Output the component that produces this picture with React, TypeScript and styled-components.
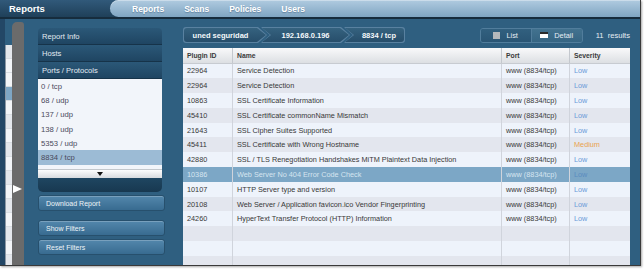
import React from "react";
import styled, { createGlobalStyle } from "styled-components";

const GlobalStyle = createGlobalStyle`
  *, *::before, *::after { box-sizing: border-box; }
  html, body { margin: 0; padding: 0; background: #fff; }
  body { font-family: "Liberation Sans", Arial, sans-serif; }
`;

type Severity = "Low" | "Medium";
type Finding = { id: string; name: string; port: string; severity: Severity };

const findings: Finding[] = [
  { id: "22964", name: "Service Detection", port: "www (8834/tcp)", severity: "Low" },
  { id: "22964", name: "Service Detection", port: "www (8834/tcp)", severity: "Low" },
  { id: "10863", name: "SSL Certificate Information", port: "www (8834/tcp)", severity: "Low" },
  { id: "45410", name: "SSL Certificate commonName Mismatch", port: "www (8834/tcp)", severity: "Low" },
  { id: "21643", name: "SSL Cipher Suites Supported", port: "www (8834/tcp)", severity: "Low" },
  { id: "45411", name: "SSL Certificate with Wrong Hostname", port: "www (8834/tcp)", severity: "Medium" },
  { id: "42880", name: "SSL / TLS Renegotiation Handshakes MiTM Plaintext Data Injection", port: "www (8834/tcp)", severity: "Low" },
  { id: "10386", name: "Web Server No 404 Error Code Check", port: "www (8834/tcp)", severity: "Low" },
  { id: "10107", name: "HTTP Server type and version", port: "www (8834/tcp)", severity: "Low" },
  { id: "20108", name: "Web Server / Application favicon.ico Vendor Fingerprinting", port: "www (8834/tcp)", severity: "Low" },
  { id: "24260", name: "HyperText Transfer Protocol (HTTP) Information", port: "www (8834/tcp)", severity: "Low" },
];

const selectedFinding = 7;
const ports = ["0 / tcp", "68 / udp", "137 / udp", "138 / udp", "5353 / udp", "8834 / tcp", "8835 / tcp"];
const selectedPort = "8834 / tcp";
const crumbs: { label: string; kind: CrumbKind; width: number }[] = [
  { label: "uned seguridad", kind: "first", width: 84 },
  { label: "192.168.0.196", kind: "middle", width: 89 },
  { label: "8834 / tcp", kind: "last", width: 61 },
];

type CrumbKind = "first" | "middle" | "last";
type Tone = "light" | "gray" | "active";

const crumbClip = {
  first: "polygon(0 0, calc(100% - 9px) 0, 100% 50%, calc(100% - 9px) 100%, 0 100%)",
  middle: "polygon(0 0, calc(100% - 9px) 0, 100% 50%, calc(100% - 9px) 100%, 0 100%, 9px 50%)",
  last: "polygon(0 0, 100% 0, 100% 100%, 0 100%, 9px 50%)",
};

const crumbRadius = {
  first: "3px 0 0 3px",
  middle: "0",
  last: "0 3px 3px 0",
};

const rowBg = {
  light: "#eef3fb",
  gray: "#e3e6ee",
  active: "#7ca7c6",
};

const Page = styled.div`
  width: 644px;
  height: 270px;
  background: #fff;
  overflow: hidden;
`;

const Window = styled.div`
  width: 641px;
  height: 266px;
  display: flex;
  flex-direction: column;
  background: #2f5f80;
  border-right: 1px solid #3a3a3a;
  border-bottom: 1px solid #3a3a3a;
  box-shadow: 1px 1px 2px rgba(0, 0, 0, 0.35);
  overflow: hidden;
`;

const TopBar = styled.div`
  height: 19px;
  flex-shrink: 0;
  display: flex;
  background: linear-gradient(#31597a, #1f4059);
  border-bottom: 2px solid #162c3d;
`;

const AppTitle = styled.div`
  width: 110px;
  padding-left: 9px;
  display: flex;
  align-items: center;
  color: #fff;
  font-size: 9.5px;
  font-weight: bold;
`;

const NavPill = styled.nav`
  flex: 1;
  display: flex;
  align-items: center;
  gap: 20px;
  padding-left: 22px;
  border-radius: 9px 0 0 9px;
  background: linear-gradient(#b0cbe0, #7fa5c2);
  box-shadow: inset 0 1px 0 rgba(255, 255, 255, 0.35);
`;

const NavLink = styled.span`
  color: #fff;
  font-size: 8.5px;
  font-weight: bold;
  text-shadow: 0 1px 1px rgba(20, 50, 80, 0.35);
`;

const Body = styled.div`
  flex: 1;
  min-height: 0;
  display: flex;
  align-items: flex-start;
`;

const BackWindow = styled.div`
  width: 12px;
  height: 100%;
  flex-shrink: 0;
  display: flex;
`;

const BackEdge = styled.div`
  width: 5px;
  height: 100%;
  background: #234766;
`;

const BackSheet = styled.div`
  width: 7px;
  height: 100%;
  margin-top: 26px;
  display: flex;
  flex-direction: column;
  background: #f1f3f6;
  border-left: 1px solid #8d99a6;
`;

const BackRow = styled.div<{ $tone: Tone }>`
  height: 14px;
  flex-shrink: 0;
  background: ${(p) => (p.$tone === "active" ? "#7ea6c4" : p.$tone === "gray" ? "#e4e7ec" : "#f3f5f8")};
  border-bottom: 1px solid #d9dde2;
`;

const Rail = styled.div`
  width: 12px;
  height: 100%;
  flex-shrink: 0;
  margin-top: 3px;
  padding-top: 163px;
  background: #6b6b6b;
  border-radius: 5px 3px 0 0;
`;

const RailArrow = styled.div`
  width: 0;
  height: 0;
  margin-left: 1px;
  border-left: 9px solid #fff;
  border-top: 4.5px solid transparent;
  border-bottom: 4.5px solid transparent;
`;

const Sidebar = styled.aside`
  width: 127px;
  flex-shrink: 0;
  margin-left: 14px;
  padding-top: 9px;
  display: flex;
  flex-direction: column;
`;

const SideNav = styled.div`
  width: 124px;
  display: flex;
  flex-direction: column;
`;

const SideItem = styled.div<{ $first?: boolean }>`
  height: 17px;
  padding-left: 4px;
  display: flex;
  align-items: center;
  color: #e2eaf1;
  font-size: 7.6px;
  background: linear-gradient(#2b5878, #1f4562);
  border-bottom: 1px solid #163349;
  border-radius: ${(p) => (p.$first ? "4px 4px 0 0" : "0")};
`;

const PortList = styled.div`
  height: 90px;
  overflow: hidden;
  background: #f2f5fa;
`;

const PortItem = styled.div<{ $active: boolean }>`
  height: 14.3px;
  padding-left: 3px;
  display: flex;
  align-items: center;
  font-size: 7.7px;
  color: #4a4a5c;
  background: ${(p) => (p.$active ? "#9cbbd5" : "transparent")};
`;

const ScrollStrip = styled.div`
  height: 9px;
  display: flex;
  align-items: center;
  justify-content: center;
  background: linear-gradient(#fdfdfd, #d8dbdf);
  border-top: 1px solid #c2c7cc;
`;

const ScrollArrow = styled.div`
  width: 0;
  height: 0;
  border-top: 4px solid #111;
  border-left: 3.5px solid transparent;
  border-right: 3.5px solid transparent;
`;

const SideFooter = styled.div`
  height: 14px;
  background: linear-gradient(#1f4661, #183850);
  border-radius: 0 0 5px 5px;
`;

const ActionButton = styled.div<{ $gap: number }>`
  height: 16px;
  margin-top: ${(p) => p.$gap}px;
  padding-left: 7px;
  display: flex;
  align-items: center;
  color: #eef4f8;
  font-size: 7px;
  background: linear-gradient(#5387ac, #386b90);
  border: 1px solid #27506d;
  border-radius: 3px;
  box-shadow: inset 0 1px 0 rgba(255, 255, 255, 0.22);
`;

const Main = styled.main`
  width: 447px;
  flex-shrink: 0;
  margin-left: 18px;
  padding-top: 8px;
  display: flex;
  flex-direction: column;
`;

const Toolbar = styled.div`
  height: 16px;
  display: flex;
  align-items: center;
`;

const Crumb = styled.div<{ $kind: CrumbKind; $width: number }>`
  width: ${(p) => p.$width}px;
  height: 16px;
  padding: 1px;
  margin-left: ${(p) => (p.$kind === "first" ? 0 : -6)}px;
  background: #5981a0;
  clip-path: ${(p) => crumbClip[p.$kind]};
  border-radius: ${(p) => crumbRadius[p.$kind]};
`;

const CrumbFace = styled.div<{ $kind: CrumbKind }>`
  height: 100%;
  display: flex;
  align-items: center;
  justify-content: center;
  padding-left: ${(p) => (p.$kind === "first" ? 0 : 9)}px;
  padding-right: ${(p) => (p.$kind === "last" ? 0 : 9)}px;
  color: #f4f8fb;
  font-size: 7.5px;
  font-weight: bold;
  white-space: nowrap;
  background: linear-gradient(#35627f, #274e6b);
  clip-path: ${(p) => crumbClip[p.$kind]};
  border-radius: ${(p) => crumbRadius[p.$kind]};
`;

const ViewToggle = styled.div`
  width: 103px;
  height: 15px;
  margin-left: auto;
  display: flex;
  border: 1px solid #517d9c;
  border-radius: 3px;
  overflow: hidden;
`;

const ToggleOption = styled.div<{ $active?: boolean }>`
  flex: 1;
  display: flex;
  align-items: center;
  justify-content: center;
  gap: 6px;
  color: #e6eef4;
  font-size: 7.4px;
  background: ${(p) =>
    p.$active ? "linear-gradient(#42728f, #366583)" : "linear-gradient(#31607f, #2a5574)"};
  & + & {
    border-left: 1px solid #517d9c;
  }
`;

const ListIcon = styled.span`
  width: 7px;
  height: 7px;
  background: #b4b8bc;
`;

const DetailIcon = styled.span`
  width: 8px;
  height: 6px;
  background: #fff;
  border-top: 2px solid #2b2b2b;
`;

const Results = styled.span`
  margin-left: 13px;
  color: #e8eef3;
  font-size: 7.6px;
  word-spacing: 2px;
  white-space: nowrap;
`;

const Table = styled.div`
  margin-top: 5px;
  display: flex;
  flex-direction: column;
`;

const HeadRow = styled.div`
  height: 15.5px;
  display: grid;
  grid-template-columns: 50px 269px 68px 60px;
  background: linear-gradient(#f9f9fa, #dcdfe3);
  border-bottom: 1px solid #c7cbd1;
`;

const HeadCell = styled.div`
  padding-left: 4px;
  display: flex;
  align-items: center;
  color: #3a3a3a;
  font-size: 6.8px;
  font-weight: bold;
  border-right: 1px solid #c4c8ce;
  &:last-child { border-right: none; }
`;

const Row = styled.div<{ $tone: Tone }>`
  height: 14.8px;
  flex-shrink: 0;
  display: grid;
  grid-template-columns: 50px 269px 68px 60px;
  background: ${(p) => rowBg[p.$tone]};
  color: ${(p) => (p.$tone === "active" ? "#d6e5f0" : "#383838")};
`;

const Cell = styled.div<{ $severity?: Severity; $active?: boolean }>`
  padding-left: 4px;
  display: flex;
  align-items: center;
  font-size: 7.3px;
  white-space: nowrap;
  overflow: hidden;
  border-right: 1px solid #d0d4dc;
  color: ${(p) =>
    p.$severity === "Medium"
      ? "#e9a24f"
      : p.$severity === "Low"
      ? p.$active
        ? "#5a8cbf"
        : "#6b9bd8"
      : "inherit"};
  &:last-child { border-right: none; }
`;

const App = () => {
  const empties = [0, 1, 2, 3];
  return (
    <Page>
      <GlobalStyle />
      <Window>
        <TopBar>
          <AppTitle>Reports</AppTitle>
          <NavPill>
            <NavLink>Reports</NavLink>
            <NavLink>Scans</NavLink>
            <NavLink>Policies</NavLink>
            <NavLink>Users</NavLink>
          </NavPill>
        </TopBar>
        <Body>
          <BackWindow>
            <BackEdge />
            <BackSheet>
              <BackRow $tone="gray" />
              <BackRow $tone="light" />
              <BackRow $tone="light" />
              <BackRow $tone="active" />
              {Array.from({ length: 12 }, (_, i) => (
                <BackRow key={i} $tone={i % 2 ? "gray" : "light"} />
              ))}
            </BackSheet>
          </BackWindow>
          <Rail>
            <RailArrow />
          </Rail>
          <Sidebar>
            <SideNav>
              <SideItem $first>Report Info</SideItem>
              <SideItem>Hosts</SideItem>
              <SideItem>Ports / Protocols</SideItem>
              <PortList>
                {ports.map((p) => (
                  <PortItem key={p} $active={p === selectedPort}>{p}</PortItem>
                ))}
              </PortList>
              <ScrollStrip>
                <ScrollArrow />
              </ScrollStrip>
              <SideFooter />
            </SideNav>
            <ActionButton $gap={3}>Download Report</ActionButton>
            <ActionButton $gap={9}>Show Filters</ActionButton>
            <ActionButton $gap={3}>Reset Filters</ActionButton>
          </Sidebar>
          <Main>
            <Toolbar>
              {crumbs.map((c) => (
                <Crumb key={c.label} $kind={c.kind} $width={c.width}>
                  <CrumbFace $kind={c.kind}>{c.label}</CrumbFace>
                </Crumb>
              ))}
              <ViewToggle>
                <ToggleOption>
                  <ListIcon />
                  List
                </ToggleOption>
                <ToggleOption $active>
                  <DetailIcon />
                  Detail
                </ToggleOption>
              </ViewToggle>
              <Results>11 results</Results>
            </Toolbar>
            <Table>
              <HeadRow>
                <HeadCell>Plugin ID</HeadCell>
                <HeadCell>Name</HeadCell>
                <HeadCell>Port</HeadCell>
                <HeadCell>Severity</HeadCell>
              </HeadRow>
              {findings.map((f, i) => {
                const active = i === selectedFinding;
                const tone: Tone = active ? "active" : i % 2 ? "gray" : "light";
                return (
                  <Row key={i} $tone={tone}>
                    <Cell>{f.id}</Cell>
                    <Cell>{f.name}</Cell>
                    <Cell>{f.port}</Cell>
                    <Cell $severity={f.severity} $active={active}>{f.severity}</Cell>
                  </Row>
                );
              })}
              {empties.map((e) => {
                const idx = findings.length + e;
                return (
                  <Row key={`e${e}`} $tone={idx % 2 ? "gray" : "light"}>
                    <Cell />
                    <Cell />
                    <Cell />
                    <Cell />
                  </Row>
                );
              })}
            </Table>
          </Main>
        </Body>
      </Window>
    </Page>
  );
};

export default App;
